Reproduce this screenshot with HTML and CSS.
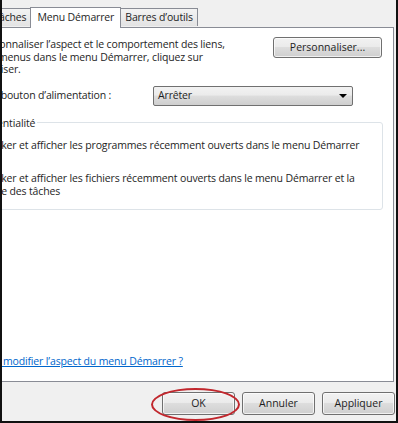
FILE: index.html
```html
<!DOCTYPE html>
<html lang="fr">
<head>
  <meta charset="UTF-8">
  <title>Propriétés de la barre des tâches et du menu Démarrer</title>
  <link rel="stylesheet" href="styles.css">
</head>
<body>
  <div class="frame">
    <div class="window">
      <div class="tabs">
        <div class="tab">Barre des tâches</div>
        <div class="tab active">Menu Démarrer</div>
        <div class="tab">Barres d’outils</div>
      </div>

      <div class="panel">
        <div class="intro">
          <p>Pour personnaliser l’aspect et le comportement des liens,<br>
             icônes et menus dans le menu Démarrer, cliquez sur<br>
             Personnaliser.</p>
          <button class="btn customize">Personnaliser...</button>
        </div>

        <div class="power">
          <span>Action du bouton d’alimentation :</span>
          <div class="select">
            <span>Arrêter</span>
            <span class="arrow"></span>
          </div>
        </div>

        <fieldset class="group">
          <legend>Confidentialité</legend>
          <label class="check">
            <span class="box"></span>
            <span>Stocker et afficher les programmes récemment ouverts dans le menu Démarrer</span>
          </label>
          <label class="check">
            <span class="box"></span>
            <span>Stocker et afficher les fichiers récemment ouverts dans le menu Démarrer et la<br>barre des tâches</span>
          </label>
        </fieldset>

        <a class="help" href="#">Comment modifier l’aspect du menu Démarrer ?</a>
      </div>
    </div>

    <div class="actions">
      <button class="btn ok">OK</button>
      <button class="btn">Annuler</button>
      <button class="btn">Appliquer</button>
    </div>
  </div>
</body>
</html>
```

FILE: styles.css
```css
* {
  margin: 0;
  padding: 0;
  box-sizing: border-box;
}

body {
  font-family: "Open Sans", "Noto Sans", sans-serif;
  font-size: 10.5px;
  letter-spacing: -0.15px;
  line-height: 12.5px;
  color: #1e1e1e;
  background: #fff;
}

/* cropped dialog, black frame on three sides */
.frame {
  width: 398px;
  height: 423px;
  background: #f0f0f0;
  border-left: 2px solid #111;
  border-right: 2px solid #111;
  border-bottom: 2px solid #111;
  overflow: hidden;
  display: flex;
  flex-direction: column;
}

.window {
  margin-left: -60px;
  margin-right: 2px;
}

/* tabs */
.tabs {
  display: flex;
  align-items: flex-end;
  height: 27px;
  padding-left: 1px;
}

.tab {
  height: 18px;
  padding: 2px 4px 0;
  margin-bottom: 1px;
  border: 1px solid #898c95;
  border-bottom: none;
  background: linear-gradient(#f3f3f3, #e3e3e3);
  white-space: nowrap;
  margin-left: -1px;
}

.tab.active {
  height: 21px;
  padding: 3px 6px 0 6px;
  margin-bottom: -1px;
  background: #fff;
  position: relative;
  z-index: 1;
}

/* main panel */
.panel {
  height: 355px;
  background: #fff;
  border: 1px solid #898c95;
  padding: 9px 10px 0 10px;
  display: flex;
  flex-direction: column;
}

.intro {
  display: flex;
  justify-content: space-between;
  align-items: flex-start;
}

.intro p {
  margin-top: 1px;
}

.btn {
  font: inherit;
  color: #1e1e1e;
  height: 22px;
  border: 1px solid #707070;
  border-radius: 3px;
  background: linear-gradient(#f2f2f2 0%, #ebebeb 45%, #dddddd 50%, #cfcfcf 100%);
  box-shadow: inset 0 0 0 1px rgba(255, 255, 255, 0.7);
}

.customize {
  width: 109px;
  height: 21px;
  margin-right: 1px;
}

.power {
  display: flex;
  align-items: center;
  justify-content: space-between;
  margin-top: 10px;
  padding-right: 30px;
}

.select {
  width: 200px;
  height: 20px;
  border: 1px solid #707070;
  border-radius: 2px;
  background: linear-gradient(#f2f2f2 0%, #ebebeb 45%, #dddddd 50%, #cfcfcf 100%);
  display: flex;
  align-items: center;
  justify-content: space-between;
  padding: 0 5px 0 4px;
}

.arrow {
  width: 0;
  height: 0;
  border-left: 4px solid transparent;
  border-right: 4px solid transparent;
  border-top: 4px solid #000;
}

.group {
  margin-top: 11px;
  border: 1px solid #dde3e8;
  border-radius: 3px;
  height: 93px;
  padding: 10px 0 0 9px;
}

.group legend {
  margin-left: 3px;
  padding: 0 2px 0 0;
  color: #1e1e1e;
}

.check {
  display: flex;
  align-items: flex-start;
  gap: 5px;
  margin-bottom: 20px;
  white-space: nowrap;
}

.box {
  width: 13px;
  height: 13px;
  border: 1px solid #8e8f8f;
  background: #fff;
  flex: none;
}

.help {
  margin-top: auto;
  margin-bottom: 14px;
  color: #0066cc;
  text-decoration: underline;
  align-self: flex-start;
}

/* bottom buttons */
.actions {
  display: flex;
  justify-content: flex-end;
  gap: 7px;
  padding: 10px 1px 0 0;
}

.actions .btn {
  width: 73px;
  height: 23px;
}

.ok {
  position: relative;
}

/* red circle drawn around the OK button */
.ok::after {
  content: "";
  position: absolute;
  left: -12px;
  top: -5px;
  right: -6px;
  bottom: -7px;
  border: 2px solid #c1272d;
  border-radius: 50%;
}
```
